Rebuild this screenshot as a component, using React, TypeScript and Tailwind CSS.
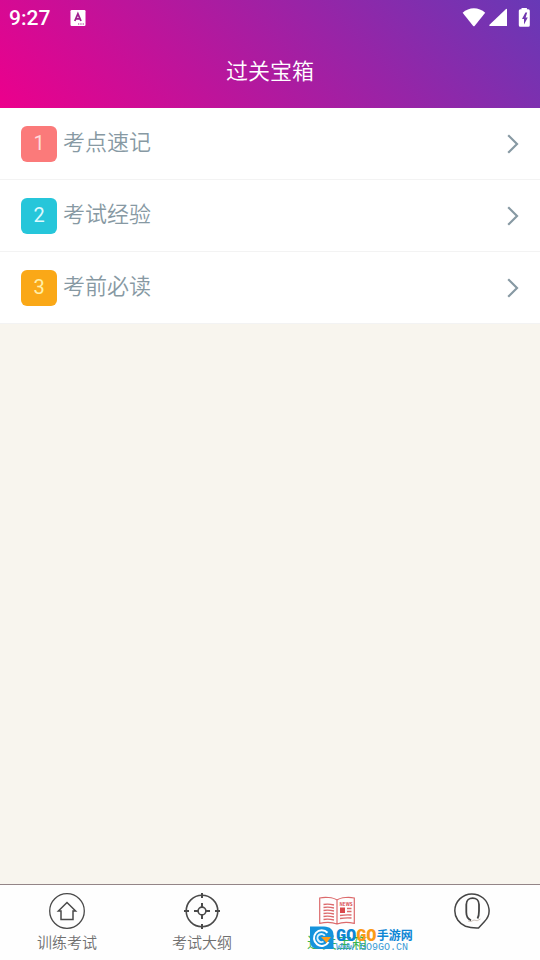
import * as React from "react";

type Topic = { id: number; title: string; badge: string };

const topics: Topic[] = [
  { id: 1, title: "考点速记", badge: "bg-[#fb7a7a] text-[#ffdcdc]" },
  { id: 2, title: "考试经验", badge: "bg-[#26c6da] text-[#dcfaff]" },
  { id: 3, title: "考前必读", badge: "bg-[#faa817] text-[#fff0a8]" },
];

function StatusBar(): React.ReactElement {
  return (
    <div className="flex h-9 items-center justify-between pr-2 pl-[9px] text-white">
      <div className="flex items-center gap-5">
        <span className="pt-[2px] font-[Roboto,sans-serif] text-[21px] font-medium">9:27</span>
        <svg className="size-4" viewBox="0 0 16 16" aria-hidden="true">
          <rect x="0.5" y="0" width="15" height="16" rx="1.2" fill="#fff" />
          <path
            d="M4.8 11 7.9 3.8 11 11M5.9 8.8h4"
            fill="none"
            stroke="#a0208f"
            strokeWidth="1.8"
          />
          <path d="M8 14h1.3M10.3 14h1.3M12.6 14h1.3" stroke="#a0208f" strokeWidth="1.2" />
        </svg>
      </div>
      <svg className="h-5 w-[70px]" viewBox="0 0 70 20" fill="#fff" aria-hidden="true">
        <path d="M.6 4.7C7-1.300 16.800-1.300 23.200 4.700L12.600 17.900q-.7.7-1.400 0Z" />
        <path d="M45 1v17H28q-1.400 0-.5-1.200L43.500 1.400Q45 .2 45 1Z" />
        <path d="M59.500-.5h5.400v1.700h1.400q1.500 0 1.500 1.500v14.600q0 1.500-1.500 1.500h-8q-1.500 0-1.500-1.500V2.700q0-1.500 1.500-1.500h1.200Z" />
        <path d="m63.400 4.500-3.400 6.500h2v5.500l3.800-7.100h-2.200L65.200 4.500Z" fill="#7138b0" />
      </svg>
    </div>
  );
}

function TopicRow({ topic }: { topic: Topic }): React.ReactElement {
  return (
    <li className="border-b border-[#f3f3f3]">
      <a href={`#topic-${topic.id}`} className="flex h-[71px] items-center gap-[6px] px-[21px]">
        <span
          className={`grid size-9 place-items-center rounded-md pb-[2px] font-[Roboto,sans-serif] text-xl leading-5 font-normal ${topic.badge}`}
        >
          {topic.id}
        </span>
        <span className="flex-1 pb-[6px] text-[22px] text-[#8799a3]">{topic.title}</span>
        <svg
          className="h-5 w-3"
          viewBox="0 0 12 20"
          fill="none"
          stroke="#8799a3"
          strokeWidth="2.2"
          aria-hidden="true"
        >
          <path d="m1.200 1.200 8.800 8.800-8.800 8.800" />
        </svg>
      </a>
    </li>
  );
}

function HomeIcon(): React.ReactElement {
  return (
    <svg className="size-9" viewBox="0 0 36 36" fill="none" stroke="#4a4a4a" aria-hidden="true">
      <circle cx="18" cy="18" r="17.3" strokeWidth="1.3" />
      <path d="m18 9.500-8.600 8.400h2.600v8.600h12v-8.600h2.600Z" strokeWidth="1.5" />
    </svg>
  );
}

function TargetIcon(): React.ReactElement {
  return (
    <svg className="size-9" viewBox="0 0 36 36" fill="none" stroke="#4a4a4a" aria-hidden="true">
      <circle cx="18" cy="18" r="15.8" strokeWidth="1.6" />
      <circle cx="18" cy="18" r="3.9" strokeWidth="1.6" />
      <path
        d="M18 0v5M18 31v5M0 18h5M31 18h5M18 10v4M18 22v4M10 18h4M22 18h4"
        strokeWidth="2"
      />
    </svg>
  );
}

function BookIcon(): React.ReactElement {
  return (
    <svg className="size-9" viewBox="0 0 36 36" fill="none" stroke="#dc6a6c" aria-hidden="true">
      <path
        d="M18 7C14 4 5 4 .7 5v25.300c5-1 13-1 17.300.7 4.300-1.700 12.300-1.700 17.300-.7V5C31 4 22 4 18 7ZM18 7V31"
        strokeWidth="1.2"
      />
      <path
        d="M4.500 11.500q5-.8 10.500.5M4.500 14.500q5-.8 10.500.5M4.500 17.500q5-.8 10.500.5M4.500 20.500q5-.8 10.500.5M4.500 23.500q5-.8 10.500.5M4.500 26.500q5-.8 10.500.5M28 15.500h4.500M28 18.500h4.500M21 22.500q6-1 11.500-.5M21 25.500q6-1 11.500-.5"
        strokeWidth="1.3"
      />
      <path d="M21 14.500h5v5.500h-5Z" fill="#d9484c" stroke="none" />
      <text x="20.5" y="12.5" fontSize="4.5" fontWeight="700" fill="#d9484c" stroke="none">
        NEWS
      </text>
    </svg>
  );
}

function ProfileIcon(): React.ReactElement {
  return (
    <svg className="size-9" viewBox="0 0 36 36" fill="none" stroke="#454545" aria-hidden="true">
      <path
        d="M11.500 33.200C5 30.500.8 24.500.8 17.800.8 8.500 8.500.9 17.800.9c8.700 0 15.800 6 17.100 14.600.8 5-.9 9.500-4.400 13l-6 6.400c-4.800.2-8.500-.1-13-1.700Z"
        strokeWidth="1.5"
      />
      <path
        d="M17 27.300c-3-1.200-4.700-4-4.700-8V11.500c0-8.500 12.700-8.500 12.700 0V18c0 3-.2 5.500-1.500 7.500"
        strokeWidth="1.8"
      />
      <path d="M14 28q3 1.500 6-1 3 2 6.500-1" stroke="#cfc4bc" />
    </svg>
  );
}

function SiteMark(): React.ReactElement {
  return (
    <span className="absolute top-[41px] left-[39px] flex items-start gap-[2px] whitespace-nowrap">
      <svg className="h-6 w-[25px]" viewBox="0 0 25 24" aria-hidden="true">
        <path d="M1 .5h14C21 .5 24.500 4 24.500 9v14H10C4 23 1 20 1 14Z" fill="#1593dc" />
        <path
          d="M18.500 6.800A7.800 7.800 0 1 0 19.500 16"
          fill="none"
          stroke="#fff"
          strokeWidth="2"
        />
        <path
          d="M15.800 9.800A4 4 0 1 0 14.500 15.500"
          fill="none"
          stroke="#d8f1ff"
          strokeWidth="2"
        />
        <path d="M12 11h10l-4.500 6-2-2.500Z" fill="#ff9b18" />
      </svg>
      <span className="flex flex-col">
        <span className="flex h-[18px] items-center">
          <span className="font-['Roboto_Condensed',Roboto,sans-serif] text-[17px] leading-none font-black">
            <span className="text-[#0d86d5]">GO</span>
            <span className="text-[#fb9a17]">GO</span>
          </span>
          <span className="text-xs leading-none font-bold text-[#0d86d5]">手游网</span>
        </span>
        <span className="font-['Liberation_Mono',monospace] text-[10px] leading-[8px] text-[#3b9bd6]">
          WWW.GO9GO.CN
        </span>
      </span>
    </span>
  );
}

const tabClass =
  "relative flex flex-1 flex-col items-center gap-[3px] pt-2 pr-px text-[15px] leading-5";

export default function App(): React.ReactElement {
  return (
    <div className="flex min-h-screen flex-col bg-[#f8f5ee] font-['Noto_Sans_CJK_SC',sans-serif] font-[350]">
      <header className="bg-[linear-gradient(45deg,#ec008c,#6739b6)]">
        <StatusBar />
        <h1 className="flex h-[72px] items-center justify-center pb-[6px] text-[22px] font-[350] text-white">
          过关宝箱
        </h1>
      </header>

      <main className="flex-1">
        <ul className="bg-white">
          {topics.map((topic) => (
            <TopicRow key={topic.id} topic={topic} />
          ))}
        </ul>
      </main>

      <nav className="flex h-[76px] border-t border-[#938587] bg-[#fefefe] text-[#707070]">
        <a href="#practice" className={tabClass}>
          <HomeIcon />
          训练考试
        </a>
        <a href="#outline" className={tabClass}>
          <TargetIcon />
          考试大纲
        </a>
        <a href="#toolbox" className={`${tabClass} text-[#39b54a]`} aria-current="page">
          <BookIcon />
          过关宝箱
          <SiteMark />
        </a>
        <a href="#profile" className={tabClass} aria-label="我的">
          <ProfileIcon />
        </a>
      </nav>
    </div>
  );
}
